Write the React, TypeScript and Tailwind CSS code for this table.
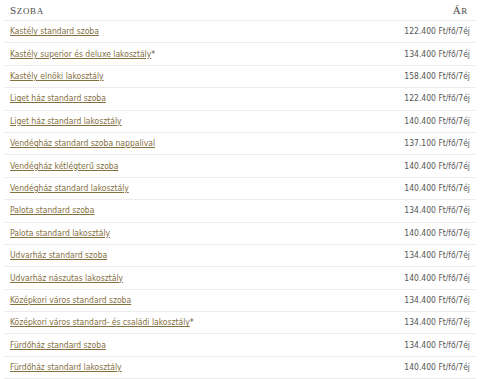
const rooms: [string, string, boolean][] = [
  ['Kastély standard szoba', '122.400 Ft/fő/7éj', false],
  ['Kastély superior és deluxe lakosztály', '134.400 Ft/fő/7éj', true],
  ['Kastély elnöki lakosztály', '158.400 Ft/fő/7éj', false],
  ['Liget ház standard szoba', '122.400 Ft/fő/7éj', false],
  ['Liget ház standard lakosztály', '140.400 Ft/fő/7éj', false],
  ['Vendégház standard szoba nappalival', '137.100 Ft/fő/7éj', false],
  ['Vendégház kétlégterű szoba', '140.400 Ft/fő/7éj', false],
  ['Vendégház standard lakosztály', '140.400 Ft/fő/7éj', false],
  ['Palota standard szoba', '134.400 Ft/fő/7éj', false],
  ['Palota standard lakosztály', '140.400 Ft/fő/7éj', false],
  ['Udvarház standard szoba', '134.400 Ft/fő/7éj', false],
  ['Udvarház nászutas lakosztály', '140.400 Ft/fő/7éj', false],
  ['Középkori város standard szoba', '134.400 Ft/fő/7éj', false],
  ['Középkori város standard- és családi lakosztály', '134.400 Ft/fő/7éj', true],
  ['Fürdőház standard szoba', '134.400 Ft/fő/7éj', false],
  ['Fürdőház standard lakosztály', '140.400 Ft/fő/7éj', false],
]

export default function App() {
  return (
    <div className="w-[480px] h-[379px] overflow-hidden bg-white px-[4px]">
      <div className="flex h-[21px] items-center justify-between border-b border-[#ececec] px-[6px] pt-[1px] font-['Liberation_Serif',serif] text-[11px] tracking-[0.06em] text-[#4a4a4a]">
        <span>S<span className="text-[9px]">ZOBA</span></span>
        <span className="pr-[2px]">Á<span className="text-[9px]">R</span></span>
      </div>
      {rooms.map(([name, price, star]) => (
        <div
          key={name}
          className="flex h-[22.4px] items-center justify-between border-b border-[#ececec] px-[6px] font-['DejaVu_Sans_Condensed','DejaVu_Sans',sans-serif] text-[8.5px]"
        >
          <span>
            <a href="#" className="text-[#85703f] underline">{name}</a>
            {star && <span className="text-[#555]">*</span>}
          </span>
          <span className="text-[#555]">{price}</span>
        </div>
      ))}
    </div>
  )
}
